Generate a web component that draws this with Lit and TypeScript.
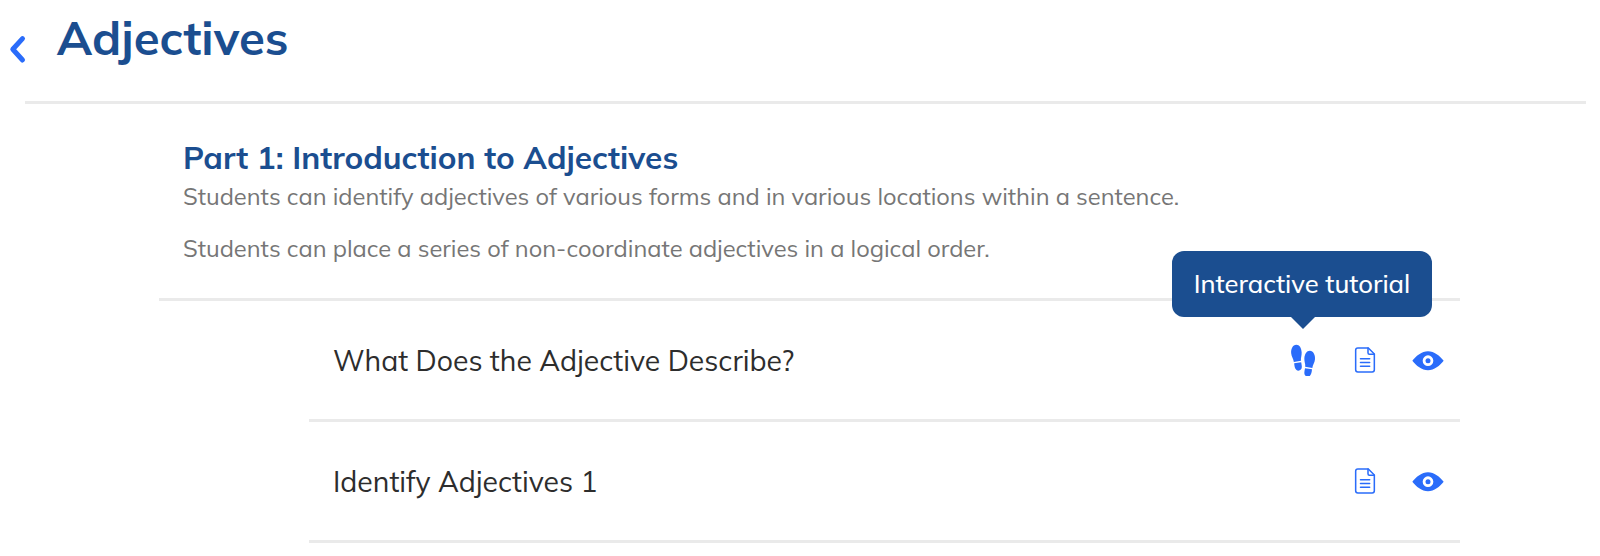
import { LitElement, html, css, svg, nothing } from "lit";
import { customElement, property } from "lit/decorators.js";

type IconName = "steps" | "doc" | "eye";

const icons = {
  steps: svg`<svg viewBox="21 26.500 96 96">
    <path d="M49 29C38 29 32.500 42 33.500 54C34.500 65 40.500 70 41.500 80.500L63 77C61.500 69 65.500 62 65 52C64 38 58.500 29 49 29Z"/>
    <path d="M42.500 84.500L63.500 81.500C64.500 87 65.500 91 65.500 95C65.500 102.500 61 106.500 55 106.500C46.500 106.500 43.500 97 42.500 84.500Z"/>
    <path d="M89.500 47C80 47 74 57 73 70C72.500 80 77 87 75.500 95L97 98.500C98 88 104 83 105 72C106 60 100 47 89.500 47Z"/>
    <path d="M75 99L96 102.500C95 115 92 124.500 83.500 124.500C77.500 124.500 73 120.500 73 113C73 109 74 104.500 75 99Z"/>
  </svg>`,
  doc: svg`<svg viewBox="15 11.500 96 96" class="line">
    <path d="M38.500 23.500H70L88 41.500V89C88 93 85.500 95.500 81.500 95.500H38.500C34.500 95.500 32 93 32 89V30C32 26 34.500 23.500 38.500 23.500Z"/>
    <path d="M69 23.500V38C69 40.500 70.500 42.500 73 42.500H88"/>
    <path d="M46.500 55.500H74M46.500 67H74M46.500 78.500H74"/>
  </svg>`,
  eye: svg`<svg viewBox="201.500 11.500 96 96">
    <path fill-rule="evenodd" d="M202.500 61.500C214 47 231 33 249.500 33S285 47 296.500 61.500C285 76 268 90 249.500 90S214 76 202.500 61.500ZM249.500 45.500A16 16 0 1 0 249.500 77.500A16 16 0 1 0 249.500 45.500Z"/>
    <circle cx="249.500" cy="61.500" r="7.500"/>
  </svg>`,
};

interface Lesson {
  title: string;
  actions: { icon: IconName; tip?: string }[];
}

const lessons: Lesson[] = [
  {
    title: "What Does the Adjective Describe?",
    actions: [{ icon: "steps", tip: "Interactive tutorial" }, { icon: "doc" }, { icon: "eye" }],
  },
  { title: "Identify Adjectives 1", actions: [{ icon: "doc" }, { icon: "eye" }] },
];

@customElement("lesson-row")
export class LessonRow extends LitElement {
  @property({ attribute: false }) lesson!: Lesson;

  static styles = css`
    :host {
      display: flex;
      align-items: center;
      justify-content: space-between;
      height: 118px;
      padding: 0 16px 0 24px;
      border-bottom: 3px solid #eaeaea;
    }
    .name {
      font-size: 28.38px;
      line-height: 36px;
      color: #2d2d2d;
    }
    .actions {
      display: flex;
      gap: 30.5px;
    }
    .action {
      position: relative;
      width: 32px;
      height: 32px;
      color: #2a6cfa;
    }
    svg {
      display: block;
      width: 32px;
      height: 32px;
      fill: currentColor;
    }
    svg.line {
      fill: none;
      stroke: currentColor;
      stroke-width: 4.6;
      stroke-linecap: round;
      stroke-linejoin: round;
    }
    .tip {
      position: absolute;
      bottom: calc(100% + 27.5px);
      left: -115px;
      box-sizing: border-box;
      width: 260px;
      padding: 14px 0 16px;
      border-radius: 12px;
      background: #1b4e90;
      color: #fff;
      font-size: 25.55px;
      font-weight: 500;
      line-height: 36px;
      text-align: center;
      white-space: nowrap;
    }
    .tip::after {
      content: "";
      position: absolute;
      top: 100%;
      left: 50%;
      margin: -0.5px 0 0 -12.5px;
      border: 13px solid transparent;
      border-top-color: #1b4e90;
      border-bottom: 0;
    }
  `;

  render() {
    return html`
      <span class="name">${this.lesson.title}</span>
      <div class="actions">
        ${this.lesson.actions.map(
          (a) => html`<div class="action">
            ${icons[a.icon]}${a.tip ? html`<div class="tip">${a.tip}</div>` : nothing}
          </div>`,
        )}
      </div>
    `;
  }
}

@customElement("app-root")
export class AppRoot extends LitElement {
  static styles = css`
    :host {
      display: block;
      height: 556px;
      overflow: hidden;
      background: #fff;
      font-family: Mulish, Lato, sans-serif;
    }
    header {
      display: flex;
      height: 101px;
      padding-left: 8px;
    }
    .back {
      width: 20px;
      height: 32px;
      margin: 33px 28.8px 0 0;
      fill: none;
      stroke: #2a6cfa;
      stroke-width: 5;
      stroke-linecap: round;
      stroke-linejoin: round;
    }
    h1 {
      margin: 8px 0 0;
      font-size: 47.25px;
      line-height: 60px;
      color: #1b4e90;
    }
    .rule {
      height: 3px;
      margin: 0 14px 0 25px;
      background: #eaeaea;
    }
    .part {
      margin: 0 140px 0 159px;
      padding: 33px 0 32px 24px;
      border-bottom: 3px solid #eaeaea;
    }
    h2 {
      margin: 0 0 1px;
      font-size: 31.6px;
      line-height: 40px;
      color: #1b4e90;
    }
    p {
      margin: 0;
      font-size: 23.68px;
      line-height: 36px;
      color: #767676;
    }
    p + p {
      margin-top: 16px;
    }
    .lessons {
      margin: 0 140px 0 309px;
    }
  `;

  render() {
    return html`
      <header>
        <svg class="back" viewBox="8 33 20 32"><path d="M22.500 38.600L12.800 49.300L22.500 60"/></svg>
        <h1>Adjectives</h1>
      </header>
      <div class="rule"></div>
      <section class="part">
        <h2>Part 1: Introduction to Adjectives</h2>
        <p>Students can identify adjectives of various forms and in various locations within a sentence.</p>
        <p>Students can place a series of non-coordinate adjectives in a logical order.</p>
      </section>
      <div class="lessons">${lessons.map((l) => html`<lesson-row .lesson=${l}></lesson-row>`)}</div>
    `;
  }
}
